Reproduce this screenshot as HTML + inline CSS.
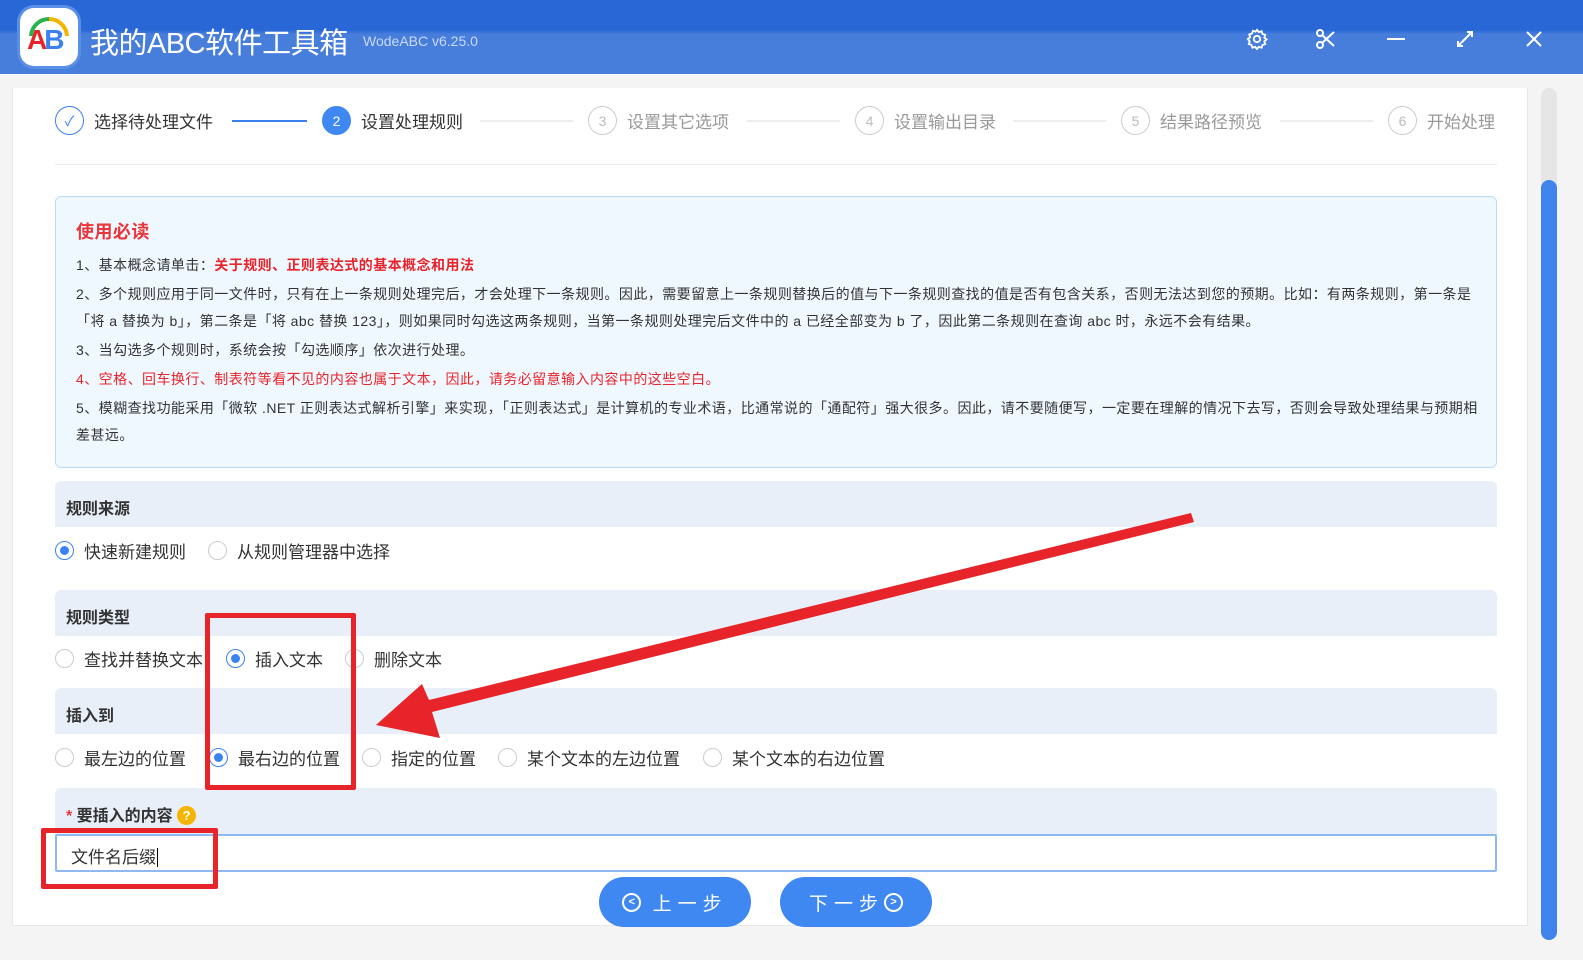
<!DOCTYPE html>
<html><head><meta charset="utf-8"><style>
*{margin:0;padding:0;box-sizing:border-box}
body{width:1583px;height:960px;overflow:hidden;background:#f4f4f4;font-family:"Liberation Sans","Noto Sans CJK SC",sans-serif;position:relative;color:#333}
.hdr{position:absolute;left:0;top:0;width:1583px;height:74px;background:linear-gradient(180deg,#2867d5 0,#2867d5 30px,#477ddb 34px,#477ddb 74px)}
.abs{position:absolute}
.card{position:absolute;left:12px;top:88px;width:1516px;height:838px;background:#fff;border-left:1px solid #e8e8e8;border-right:1px solid #e8e8e8;border-bottom:1px solid #e8e8e8}
.step{position:absolute;top:106px;display:flex;align-items:center;font-size:17px;color:#999}
.c{width:29px;height:29px;border-radius:50%;border:1px solid #ccc;display:flex;align-items:center;justify-content:center;font-size:14px;color:#bbb;margin-right:10px}
.ln{position:absolute;top:120px;height:2px;background:#eee}
.notice{position:absolute;left:55px;top:196px;width:1442px;height:272px;background:#f0f8ff;border:1px solid #b7dcf7;border-radius:6px;font-size:14px;letter-spacing:0.45px;color:#333}
.notice p{position:absolute;left:20px;line-height:27px}
.sec{position:absolute;left:55px;width:1442px;height:46px;background:#e8eff9;border-radius:6px 6px 0 0;font-size:16px;font-weight:bold;padding:14px 0 0 11px;color:#333}
.r{position:absolute;display:flex;align-items:center;font-size:17px;color:#333}
.rb{width:19px;height:19px;border-radius:50%;border:1px solid #ccc;margin-right:10px;background:#fff;position:relative}
.rb.on{border-color:#3b82f0}
.rb.on::after{content:"";position:absolute;left:4px;top:4px;width:9px;height:9px;border-radius:50%;background:#3b82f0}
.red{position:absolute;border:5px solid #e8242b;border-radius:2px}
.btn{position:absolute;top:877px;width:152px;height:50px;border-radius:25px;background:#3f88f2;color:#fff;font-size:19px;display:flex;align-items:center;justify-content:center;letter-spacing:6px}
.ci{display:inline-block;width:19px;height:19px;border:2px solid #fff;border-radius:50%;font-size:11px;line-height:15px;text-align:center;letter-spacing:0;font-weight:bold}
</style></head><body>
<div class="hdr"></div>
<div class="abs" style="left:20px;top:8px;width:58px;height:58px;border-radius:14px;background:#fff;box-shadow:0 0 0 3px #5a8fe6"></div>
<div class="abs" style="left:27px;top:24px;font-size:28px;font-weight:bold;letter-spacing:-3px"><span style="color:#e8242b">A</span><span style="color:#3b82f0">B</span></div>
<svg class="abs" style="left:26px;top:14px" width="46" height="24"><path d="M5 22 A18 18 0 0 1 23 5" stroke="#2bb24c" stroke-width="4" fill="none"/><path d="M23 5 A18 18 0 0 1 41 22" stroke="#f4b400" stroke-width="4" fill="none"/></svg>
<div class="abs" style="left:90px;top:20px;color:#fff;font-size:29px;letter-spacing:-0.5px">我的ABC软件工具箱</div>
<div class="abs" style="left:363px;top:33px;color:#c9daf5;font-size:14px">WodeABC v6.25.0</div>
<svg class="abs" style="left:1246px;top:28px" width="22" height="22" viewBox="0 0 24 24" fill="none" stroke="#fff" stroke-width="2"><circle cx="12" cy="12" r="3.5"/><path d="M12 2l2 2.5 3-1 1 3 3 1-1 3 2.5 2-2.5 2 1 3-3 1-1 3-3-1-2 2.5-2-2.5-3 1-1-3-3-1 1-3L2 12l2.5-2-1-3 3-1 1-3 3 1z"/></svg>
<svg class="abs" style="left:1316px;top:29px" width="20" height="20" viewBox="0 0 20 20" fill="none" stroke="#fff" stroke-width="2"><circle cx="4" cy="4" r="3"/><circle cx="4" cy="16" r="3"/><path d="M6 6L18 17M6 14L18 3"/></svg>
<div class="abs" style="left:1387px;top:38px;width:18px;height:2px;background:#fff"></div>
<svg class="abs" style="left:1456px;top:30px" width="18" height="18" viewBox="0 0 18 18" stroke="#fff" stroke-width="2" fill="none"><path d="M2 16L16 2M11 2h5v5M2 11v5h5"/></svg>
<svg class="abs" style="left:1526px;top:31px" width="16" height="16" stroke="#fff" stroke-width="2"><path d="M1 1L15 15M15 1L1 15"/></svg>
<div class="card"></div>
<div class="abs" style="left:1541px;top:88px;width:16px;height:852px;border-radius:8px;background:#e6e6e6"></div>
<div class="abs" style="left:1541px;top:180px;width:16px;height:760px;border-radius:8px;background:#3f84ea"></div>

<div class="step" style="left:55px;color:#333"><div class="c" style="border-color:#3b82f0;color:#3b82f0">✓</div>选择待处理文件</div>
<div class="ln" style="left:232px;width:75px;background:#3b82f0"></div>
<div class="step" style="left:322px;color:#333"><div class="c" style="background:#3f88f2;border-color:#3f88f2;color:#fff">2</div>设置处理规则</div>
<div class="ln" style="left:480px;width:93px"></div>
<div class="step" style="left:588px"><div class="c">3</div>设置其它选项</div>
<div class="ln" style="left:747px;width:93px"></div>
<div class="step" style="left:855px"><div class="c">4</div>设置输出目录</div>
<div class="ln" style="left:1013px;width:93px"></div>
<div class="step" style="left:1121px"><div class="c">5</div>结果路径预览</div>
<div class="ln" style="left:1280px;width:93px"></div>
<div class="step" style="left:1388px"><div class="c">6</div>开始处理</div>
<div class="abs" style="left:55px;top:164px;width:1442px;height:1px;background:#eee"></div>

<div class="notice">
<p style="top:22px;font-size:18px;font-weight:bold;color:#e8363b">使用必读</p>
<p style="top:55px">1、基本概念请单击：<b style="color:#e8242b">关于规则、正则表达式的基本概念和用法</b></p>
<p style="top:84px;width:1405px">2、多个规则应用于同一文件时，只有在上一条规则处理完后，才会处理下一条规则。因此，需要留意上一条规则替换后的值与下一条规则查找的值是否有包含关系，否则无法达到您的预期。比如：有两条规则，第一条是「将 a 替换为 b」，第二条是「将 abc 替换 123」，则如果同时勾选这两条规则，当第一条规则处理完后文件中的 a 已经全部变为 b 了，因此第二条规则在查询 abc 时，永远不会有结果。</p>
<p style="top:140px">3、当勾选多个规则时，系统会按「勾选顺序」依次进行处理。</p>
<p style="top:169px;color:#e8242b">4、空格、回车换行、制表符等看不见的内容也属于文本，因此，请务必留意输入内容中的这些空白。</p>
<p style="top:198px;width:1405px">5、模糊查找功能采用「微软 .NET 正则表达式解析引擎」来实现，「正则表达式」是计算机的专业术语，比通常说的「通配符」强大很多。因此，请不要随便写，一定要在理解的情况下去写，否则会导致处理结果与预期相差甚远。</p>
</div>

<div class="sec" style="top:481px">规则来源</div>
<div class="r" style="left:55px;top:538px"><div class="rb on"></div>快速新建规则</div>
<div class="r" style="left:208px;top:538px"><div class="rb"></div>从规则管理器中选择</div>
<div class="sec" style="top:590px">规则类型</div>
<div class="r" style="left:55px;top:646px"><div class="rb"></div>查找并替换文本</div>
<div class="r" style="left:226px;top:646px"><div class="rb on"></div>插入文本</div>
<div class="r" style="left:345px;top:646px"><div class="rb"></div>删除文本</div>
<div class="sec" style="top:688px">插入到</div>
<div class="r" style="left:55px;top:745px"><div class="rb"></div>最左边的位置</div>
<div class="r" style="left:209px;top:745px"><div class="rb on"></div>最右边的位置</div>
<div class="r" style="left:362px;top:745px"><div class="rb"></div>指定的位置</div>
<div class="r" style="left:498px;top:745px"><div class="rb"></div>某个文本的左边位置</div>
<div class="r" style="left:703px;top:745px"><div class="rb"></div>某个文本的右边位置</div>
<div class="sec" style="top:788px;height:50px"><span style="color:#e8363b">*</span> 要插入的内容 <span style="display:inline-block;width:19px;height:19px;border-radius:50%;background:#f4b400;color:#fff;font-size:13px;text-align:center;line-height:19px;vertical-align:1px">?</span></div>
<div class="abs" style="left:55px;top:834px;width:1442px;height:38px;border:2px solid #8fb8f5;background:#fff;font-size:17px;padding:7px 14px;border-radius:2px">文件名后缀<span style="border-left:1px solid #000;margin-left:1px"></span></div>

<div class="red" style="left:205px;top:613px;width:151px;height:177px"></div>
<div class="red" style="left:41px;top:828px;width:177px;height:61px"></div>
<svg class="abs" style="left:0;top:0" width="1583" height="960"><polygon points="1191,513 1194,522 432,712 440,738 376,725 422,684 429,700" fill="#e8242b"/></svg>

<div class="btn" style="left:599px"><span class="ci">&lt;</span>&nbsp;上一步</div>
<div class="btn" style="left:780px">下一步<span class="ci">&gt;</span></div>
</body></html>
